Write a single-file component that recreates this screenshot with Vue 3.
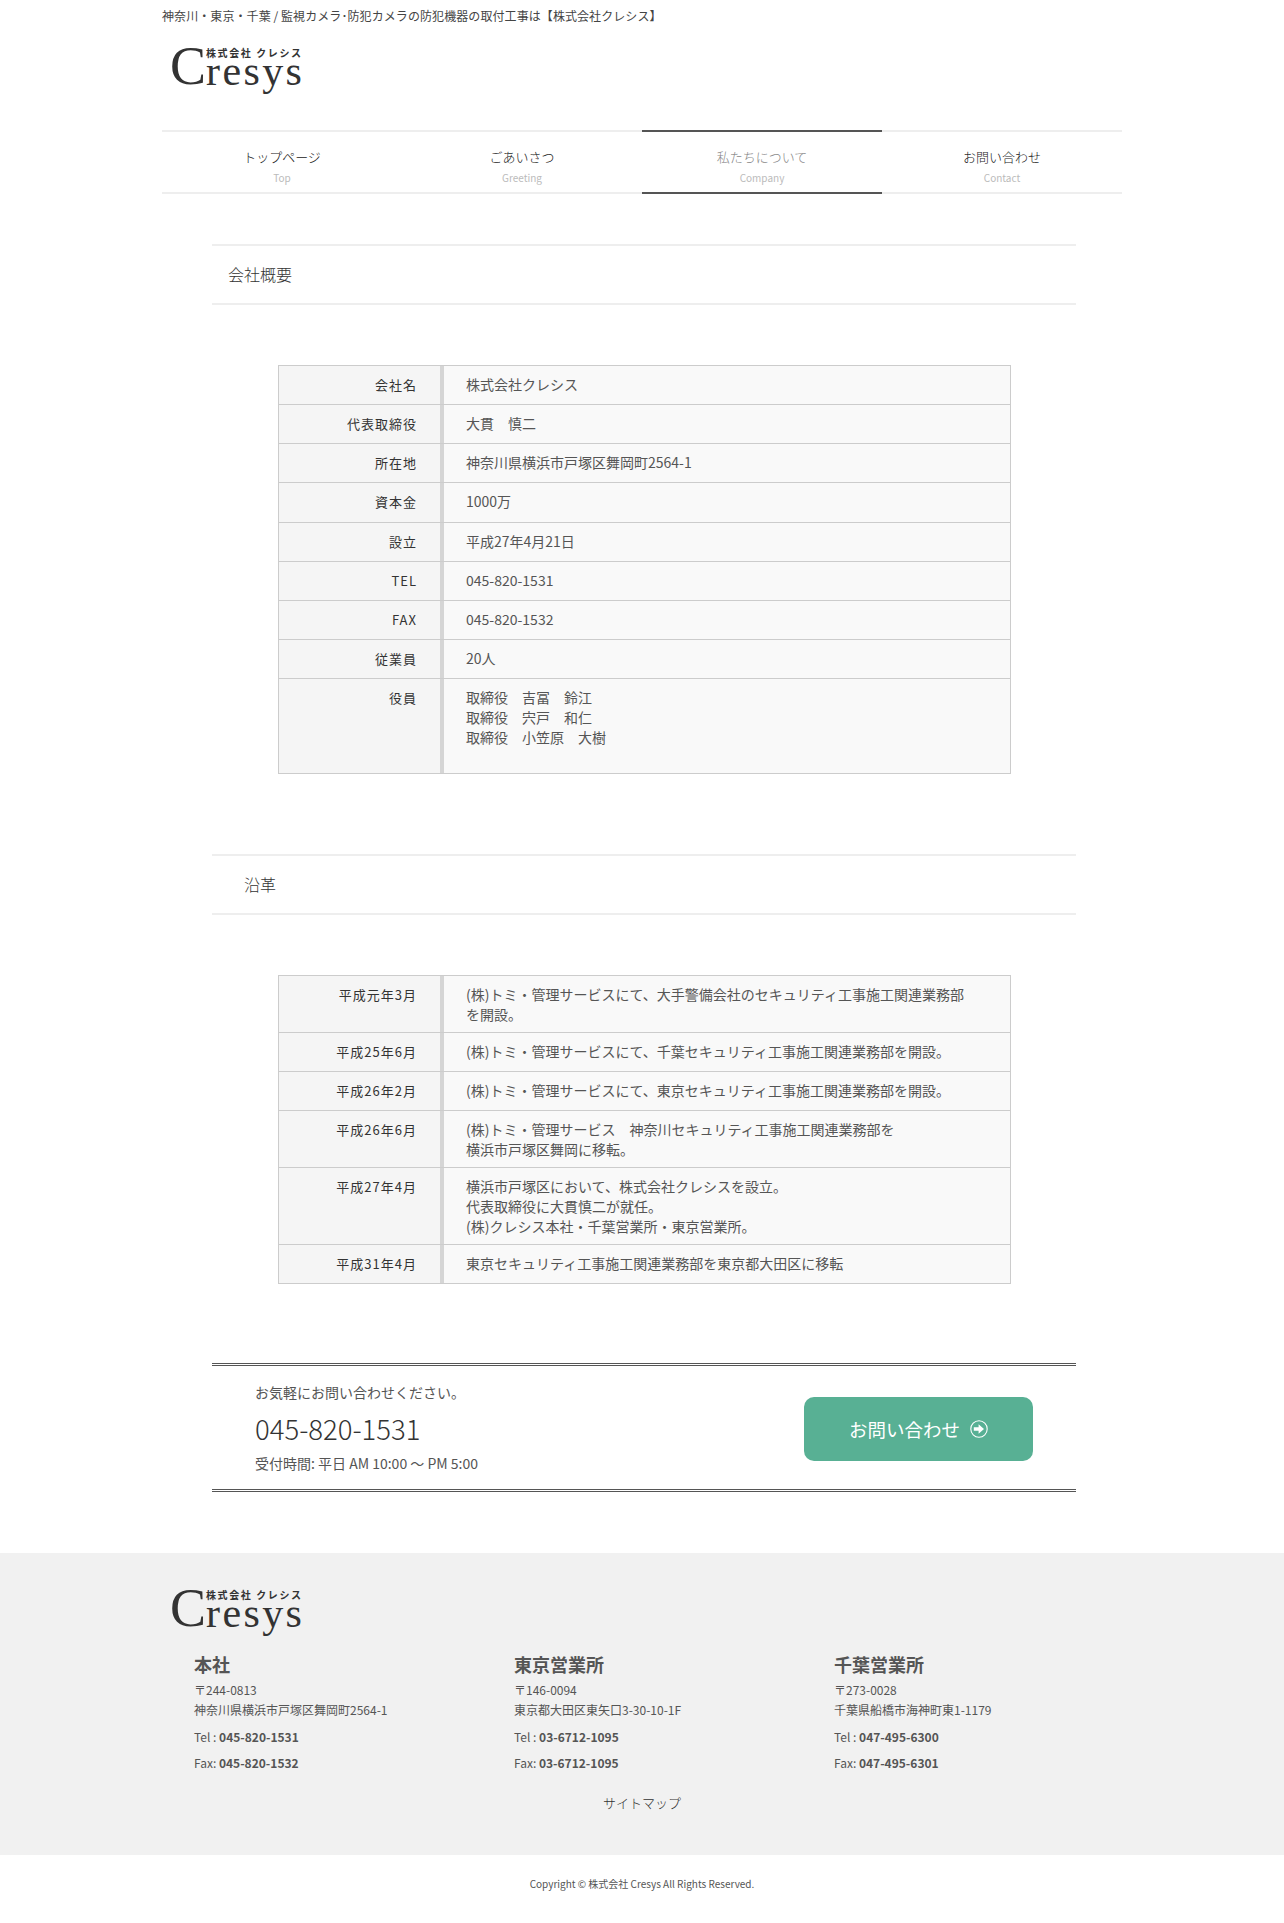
<script setup>
const nav = [
  { ja: 'トップページ', en: 'Top' },
  { ja: 'ごあいさつ', en: 'Greeting' },
  { ja: '私たちについて', en: 'Company', active: true },
  { ja: 'お問い合わせ', en: 'Contact' },
]
const company = [
  { h: '会社名', d: ['株式会社クレシス'] },
  { h: '代表取締役', d: ['大貫　慎二'] },
  { h: '所在地', d: ['神奈川県横浜市戸塚区舞岡町2564-1'] },
  { h: '資本金', d: ['1000万'] },
  { h: '設立', d: ['平成27年4月21日'] },
  { h: 'TEL', d: ['045-820-1531'] },
  { h: 'FAX', d: ['045-820-1532'] },
  { h: '従業員', d: ['20人'] },
  { h: '役員', d: ['取締役　吉冨　鈴江', '取締役　宍戸　和仁', '取締役　小笠原　大樹'], extra: true },
]
const history = [
  { h: '平成元年3月', d: ['(株)トミ・管理サービスにて、大手警備会社のセキュリティ工事施工関連業務部', 'を開設。'] },
  { h: '平成25年6月', d: ['(株)トミ・管理サービスにて、千葉セキュリティ工事施工関連業務部を開設。'] },
  { h: '平成26年2月', d: ['(株)トミ・管理サービスにて、東京セキュリティ工事施工関連業務部を開設。'] },
  { h: '平成26年6月', d: ['(株)トミ・管理サービス　神奈川セキュリティ工事施工関連業務部を', '横浜市戸塚区舞岡に移転。'] },
  { h: '平成27年4月', d: ['横浜市戸塚区において、株式会社クレシスを設立。', '代表取締役に大貫慎二が就任。', '(株)クレシス本社・千葉営業所・東京営業所。'] },
  { h: '平成31年4月', d: ['東京セキュリティ工事施工関連業務部を東京都大田区に移転'] },
]
const offices = [
  { name: '本社', zip: '〒244-0813', addr: '神奈川県横浜市戸塚区舞岡町2564-1', tel: '045-820-1531', fax: '045-820-1532' },
  { name: '東京営業所', zip: '〒146-0094', addr: '東京都大田区東矢口3-30-10-1F', tel: '03-6712-1095', fax: '03-6712-1095' },
  { name: '千葉営業所', zip: '〒273-0028', addr: '千葉県船橋市海神町東1-1179', tel: '047-495-6300', fax: '047-495-6301' },
]
</script>

<template>
  <div class="page">
    <header class="wrap">
      <p class="tagline">神奈川・東京・千葉 / 監視カメラ･防犯カメラの防犯機器の取付工事は【株式会社クレシス】</p>
      <div class="logo top-logo">
        <span class="logo-c">C</span>
        <span class="logo-rest">
          <span class="logo-ja">株式会社 クレシス</span>
          <span class="logo-en">resys</span>
        </span>
      </div>
      <nav class="nav">
        <a v-for="n in nav" :key="n.en" class="nav-item" :class="{ active: n.active }">
          <span class="nav-ja">{{ n.ja }}</span>
          <span class="nav-en">{{ n.en }}</span>
        </a>
      </nav>
    </header>

    <main class="main">
      <h2 class="sec-title first">会社概要</h2>
      <div class="table">
        <div v-for="r in company" :key="r.h" class="row" :class="{ extra: r.extra }">
          <div class="th">{{ r.h }}</div>
          <div class="td"><div v-for="(l, i) in r.d" :key="i">{{ l }}</div></div>
        </div>
      </div>

      <h2 class="sec-title second">沿革</h2>
      <div class="table">
        <div v-for="r in history" :key="r.h + r.d[0]" class="row">
          <div class="th">{{ r.h }}</div>
          <div class="td"><div v-for="(l, i) in r.d" :key="i">{{ l }}</div></div>
        </div>
      </div>

      <section class="cta">
        <div class="cta-text">
          <p class="cta-lead">お気軽にお問い合わせください。</p>
          <p class="cta-tel">045-820-1531</p>
          <p class="cta-hours">受付時間: 平日 AM 10:00 ～ PM 5:00</p>
        </div>
        <a class="cta-btn">
          お問い合わせ
          <svg class="cta-icon" width="18" height="18" viewBox="0 0 18 18">
            <circle cx="9" cy="9" r="8.2" fill="none" stroke="#fff" stroke-width="1.1" />
            <path d="M3.8 7.2h4.8V4.2L14 9l-5.4 4.8v-3H3.8z" fill="#fff" />
          </svg>
        </a>
      </section>
    </main>

    <footer class="footer">
      <div class="wrap">
        <div class="logo foot-logo">
          <span class="logo-c">C</span>
          <span class="logo-rest">
            <span class="logo-ja">株式会社 クレシス</span>
            <span class="logo-en">resys</span>
          </span>
        </div>
        <div class="offices">
          <div v-for="o in offices" :key="o.name" class="office">
            <h3>{{ o.name }}</h3>
            <p class="addr">{{ o.zip }}<br />{{ o.addr }}</p>
            <p class="ph">Tel : <b>{{ o.tel }}</b></p>
            <p class="ph">Fax: <b>{{ o.fax }}</b></p>
          </div>
        </div>
        <p class="sitemap">サイトマップ</p>
      </div>
    </footer>
    <p class="copy">Copyright © 株式会社 Cresys All Rights Reserved.</p>
  </div>
</template>

<style>
html, body { margin: 0; background: #fff; }
</style>

<style scoped>
.page {
  font-family: "Noto Sans CJK JP", "Noto Sans", sans-serif;
  font-weight: 400;
  color: #555;
  width: 1284px;
  height: 1923px;
  overflow: hidden;
}
p, h2, h3 { margin: 0; }
.wrap { width: 960px; margin: 0 auto; }
.tagline { font-size: 12px; line-height: 20px; padding-top: 6px; color: #444; letter-spacing: 0.08px; }
.logo { display: flex; color: #333; font-family: "Liberation Serif", serif; }
.top-logo { margin: 20px 0 0 8px; height: 59px; }
.logo-c { font-size: 54px; line-height: 40px; width: 36px; flex: none; }
.logo-rest { display: flex; flex-direction: column; }
.logo-ja { font-family: "Noto Sans CJK JP", sans-serif; font-weight: 700; font-size: 10px; line-height: 12px; white-space: nowrap; letter-spacing: 1.6px; margin-top: 1px; }
.logo-en { font-size: 42px; line-height: 20px; letter-spacing: 2.4px; white-space: nowrap; margin-top: 2px; }
.nav { display: flex; margin-top: 25px; }
.nav-item { width: 240px; height: 60px; border-top: 2px solid #eee; border-bottom: 2px solid #eee; display: flex; flex-direction: column; align-items: center; }
.nav-item.active { border-color: #555; }
.nav-ja { font-size: 13px; font-weight: 300; line-height: 20px; margin-top: 15px; color: #222; }
.nav-en { font-size: 10px; line-height: 16px; margin-top: 3px; color: #bbb; }
.active .nav-ja { color: #888; }
.main { width: 864px; margin: 0 0 0 212px; }
.sec-title { font-size: 16px; font-weight: 300; line-height: 57px; border-top: 2px solid #eee; border-bottom: 2px solid #eee; color: #333; }
.sec-title.first { margin-top: 50px; padding-left: 16px; }
.sec-title.second { margin-top: 80px; padding-left: 32px; }
.table { width: 733px; margin: 60px 0 0 66px; border: 1px solid #ccc; border-bottom: 0; box-sizing: border-box; font-size: 14px; }
.row { display: flex; border-bottom: 1px solid #ccc; min-height: 38px; }
.row:nth-child(4) { min-height: 39px; }
.th { width: 165px; box-sizing: border-box; flex: none; background: #f5f5f5; border-right: 4px solid #d5d5d5; text-align: right; padding: 9px 23px 7px 0; line-height: 20px; font-size: 13px; letter-spacing: 1px; color: #333; }
.td { flex: 1; background: #f9f9f9; padding: 8px 20px 8px 22px; line-height: 20px; color: #555; }
.extra .td { padding-bottom: 26px; }
.cta { margin-top: 79px; height: 129px; box-sizing: border-box; border-top: 3px double #555; border-bottom: 3px double #555; display: flex; justify-content: space-between; align-items: center; padding: 2px 43px 0 43px; }
.cta-text { margin-top: -2px; }
.cta-lead { font-size: 14px; line-height: 20px; }
.cta-tel { font-size: 27.5px; font-weight: 300; line-height: 40px; margin-top: 6px; color: #333; }
.cta-hours { font-size: 14px; line-height: 20px; margin-top: 5px; }
.cta-btn { width: 229px; height: 64px; border-radius: 10px; background: #58b094; color: #fff; font-size: 18.5px; font-weight: 400; display: flex; align-items: center; justify-content: center; gap: 10px; }
.footer { background: #f1f1f1; height: 302px; margin-top: 61px; padding-top: 1px; box-sizing: border-box; }
.foot-logo { margin: 34px 0 0 8px; height: 63px; }
.offices { display: grid; grid-template-columns: repeat(3, 320px); padding-left: 32px; }
.office h3 { font-size: 18px; line-height: 26px; font-weight: 700; color: #555; }
.addr { font-size: 12px; line-height: 20px; margin: 3px 0 7px; }
.ph { font-size: 12px; line-height: 20px; margin-top: 6px; }
.ph b { font-weight: 700; color: #555; }
.sitemap { font-size: 13px; font-weight: 300; line-height: 20px; text-align: center; margin-top: 20px; color: #333; }
.copy { font-size: 10px; line-height: 16px; text-align: center; margin-top: 21px; }
</style>
